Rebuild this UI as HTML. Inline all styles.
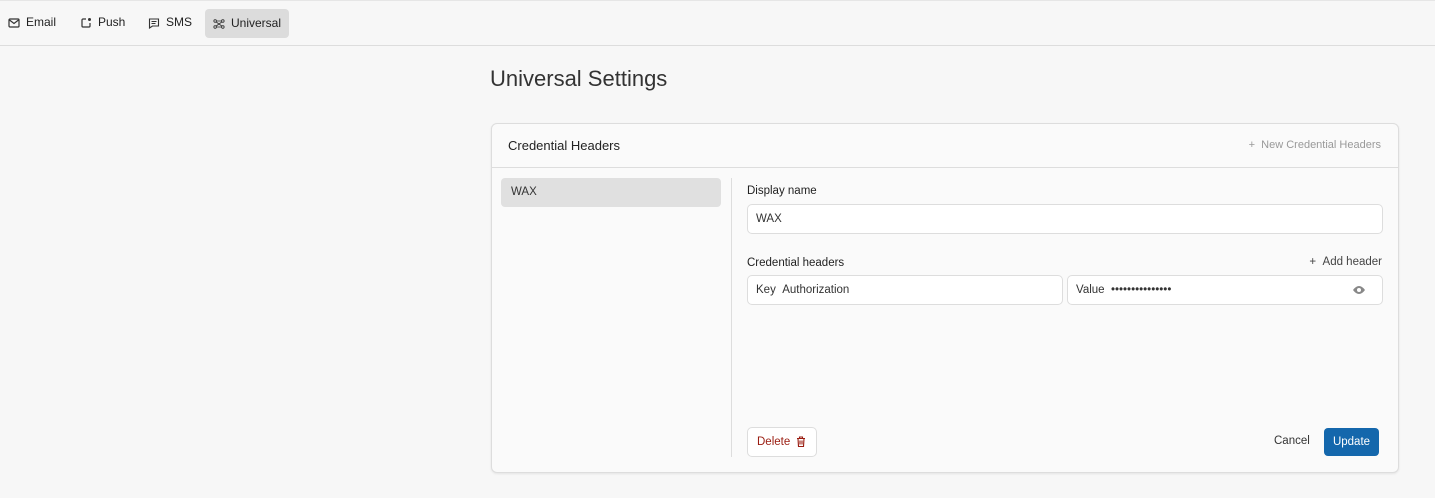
<!DOCTYPE html><html><head><style>
*{box-sizing:border-box;margin:0;padding:0}
body{width:1435px;height:498px;background:#f7f7f7;font-family:"Liberation Sans",sans-serif;color:#333;position:relative;overflow:hidden;font-size:12px}
.top{position:absolute;left:0;top:0;width:1435px;height:46px;border-bottom:1px solid #ddd;border-top:1px solid #e6e6e6}
.tab{position:absolute;top:7px;height:29px;line-height:29px;font-size:12px;color:#222;display:flex;align-items:center;gap:6px;padding:0 8px}
.tab.act{background:#dcdcdc;border-radius:4px}
.ab{position:absolute}
.card{position:absolute;left:491px;top:123px;width:908px;height:350px;background:#fafafa;border:1px solid #ddd;border-radius:6px;box-shadow:0 1px 2px rgba(0,0,0,.08)}
.inp{position:absolute;height:30px;border:1px solid #ddd;border-radius:5px;background:#fff;font-size:11.5px;line-height:28px;padding-left:8px;color:#333}
</style></head><body>
<div class="top">
<div class="tab" style="left:0"><svg width="12" height="10" viewBox="0 0 12 10"><rect x="1" y="1" width="10" height="8" rx="1" fill="none" stroke="#333" stroke-width="1.2"/><path d="M1.5 2l4.5 3.5 4.5-3.5" fill="none" stroke="#333" stroke-width="1.2"/></svg>Email</div>
<div class="tab" style="left:72px"><svg width="12" height="12" viewBox="0 0 12 12"><path d="M6 2H3a1 1 0 0 0-1 1v6a1 1 0 0 0 1 1h6a1 1 0 0 0 1-1V6" fill="none" stroke="#333" stroke-width="1.2"/><circle cx="9.5" cy="2.5" r="1.5" fill="#333"/></svg>Push</div>
<div class="tab" style="left:140px"><svg width="12" height="12" viewBox="0 0 12 12"><path d="M1.5 2h9v7h-6l-3 2z" fill="none" stroke="#333" stroke-width="1.1"/><path d="M3.5 4.5h5M3.5 6.5h4" stroke="#333"/></svg>SMS</div>
<div class="tab act" style="left:205px;width:84px;top:8px"><svg width="14" height="12" viewBox="0 0 14 12"><circle cx="2.5" cy="2.5" r="1.5" fill="none" stroke="#333"/><circle cx="11.5" cy="2.5" r="1.5" fill="none" stroke="#333"/><circle cx="2.5" cy="9.5" r="1.5" fill="none" stroke="#333"/><circle cx="11.5" cy="9.5" r="1.5" fill="none" stroke="#333"/><path d="M4 2.5h6M4 9.5h6M3.5 3.5l7 5M10.5 3.5l-7 5" stroke="#333"/></svg>Universal</div>
</div>
<div class="ab" style="left:490px;top:66px;font-size:22px;color:#333">Universal Settings</div>
<div class="card">
<div class="ab" style="left:16px;top:14px;font-size:13px;color:#222">Credential Headers</div>
<div class="ab" style="right:17px;top:15px;font-size:11px;color:#999">+&nbsp;&nbsp;New Credential Headers</div>
<div class="ab" style="left:0;top:43px;width:906px;border-top:1px solid #ddd"></div>
<div class="ab" style="left:9px;top:54px;width:220px;height:29px;background:#e0e0e0;border-radius:4px;line-height:29px;padding-left:10px;font-size:11.5px">WAX</div>
<div class="ab" style="left:239px;top:54px;height:279px;border-left:1px solid #ddd"></div>
<div class="ab" style="left:255px;top:61px;font-size:11.5px;color:#222">Display name</div>
<div class="inp" style="left:255px;top:80px;width:636px">WAX</div>
<div class="ab" style="left:255px;top:133px;font-size:11.5px;color:#222">Credential headers</div>
<div class="ab" style="right:16px;top:132px;font-size:11.5px;color:#444">+&nbsp;&nbsp;Add header</div>
<div class="inp" style="left:255px;top:151px;width:316px">Key&nbsp;&nbsp;Authorization</div>
<div class="inp" style="left:575px;top:151px;width:316px">Value&nbsp;&nbsp;•••••••••••••••<svg style="position:absolute;right:16px;top:9px" width="14" height="10" viewBox="0 0 14 10"><path d="M1 5q6-8 12 0q-6 8-12 0z" fill="#888"/><circle cx="7" cy="5" r="2" fill="#fff"/></svg></div>
<div class="ab" style="left:255px;top:303px;width:70px;height:30px;border:1px solid #ddd;border-radius:5px;background:#fff;color:#9a1c10;font-size:11.5px;line-height:28px;padding-left:9px">Delete <svg style="vertical-align:-2px;margin-left:3px" width="10" height="11" viewBox="0 0 10 11"><path d="M1 2.5h8M3.5 2.5V1h3v1.5M2 2.5l.5 8h5l.5-8M4 4.5v4M6 4.5v4" fill="none" stroke="#9a1c10" stroke-width="1.1"/></svg></div>
<div class="ab" style="left:782px;top:311px;font-size:11.5px;color:#333">Cancel</div>
<div class="ab" style="left:832px;top:304px;width:55px;height:28px;background:#1467ac;border-radius:4px;color:#fff;font-size:11.5px;line-height:28px;text-align:center">Update</div>
</div>
</body></html>
